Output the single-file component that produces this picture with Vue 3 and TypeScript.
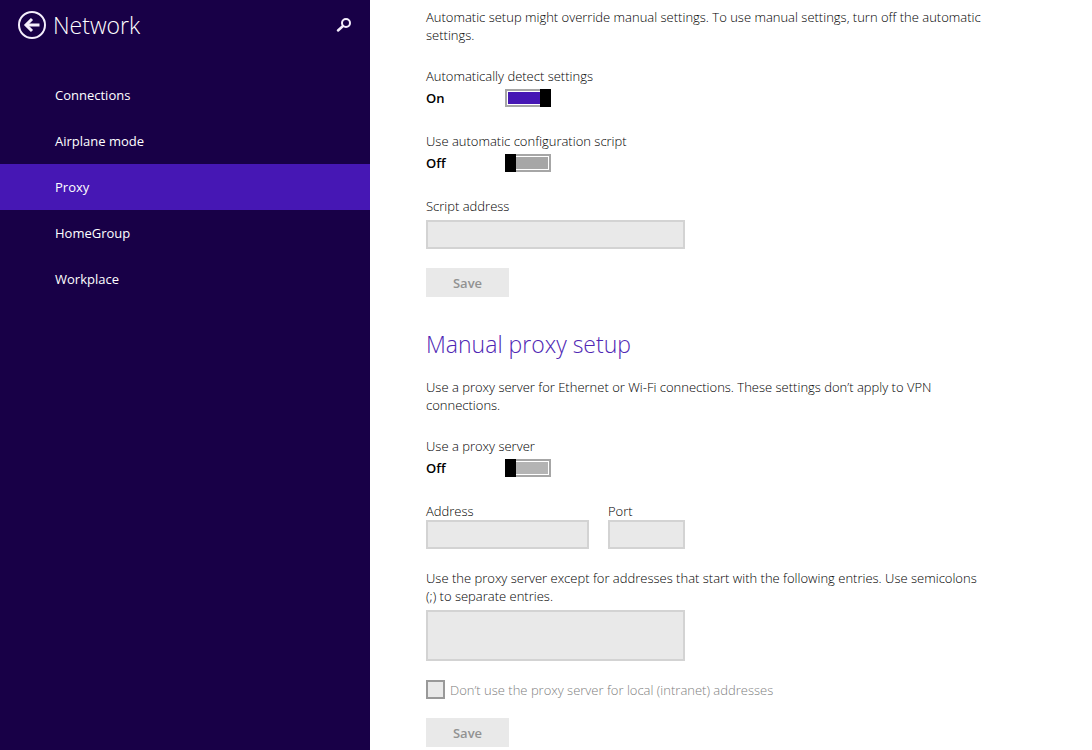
<script setup lang="ts">
import { ref } from 'vue'

interface NavItem {
  id: string
  label: string
}

const navItems: NavItem[] = [
  { id: 'connections', label: 'Connections' },
  { id: 'airplane', label: 'Airplane mode' },
  { id: 'proxy', label: 'Proxy' },
  { id: 'homegroup', label: 'HomeGroup' },
  { id: 'workplace', label: 'Workplace' },
]

const current = ref('proxy')
const autoDetect = ref(true)
const useScript = ref(false)
const useProxy = ref(false)
const scriptAddress = ref('')
const address = ref('')
const port = ref('')
const exceptions = ref('')
const bypassLocal = ref(false)
</script>

<template>
  <div class="settings">
    <aside class="sidebar">
      <header class="top">
        <button class="icon-button" type="button" aria-label="Back">
          <svg width="30" height="30" viewBox="0 0 30 30" fill="none" stroke="currentColor">
            <circle cx="15" cy="15" r="13" stroke-width="2" />
            <path d="M9 15H22.500" stroke-width="3" />
            <path d="M15 9L9 15L15 21" stroke-width="3" />
          </svg>
        </button>
        <h1 class="title">Network</h1>
        <button class="icon-button" type="button" aria-label="Search">
          <svg width="16" height="16" viewBox="0 0 16 16" fill="none" stroke="currentColor">
            <circle cx="10" cy="6" r="4" stroke-width="2" />
            <path d="M7 9L2 13.500" stroke-width="2.500" stroke-linecap="round" />
          </svg>
        </button>
      </header>
      <nav class="nav">
        <a
          v-for="item in navItems"
          :key="item.id"
          :href="'#' + item.id"
          class="nav-item"
          :class="{ active: item.id === current }"
          @click.prevent="current = item.id"
        >{{ item.label }}</a>
      </nav>
    </aside>

    <main class="content">
      <section>
        <p class="text">Automatic setup might override manual settings. To use manual settings, turn off the automatic settings.</p>

        <div class="field">
          <label for="detect">Automatically detect settings</label>
          <div class="switch-row">
            <span class="state">{{ autoDetect ? 'On' : 'Off' }}</span>
            <input id="detect" v-model="autoDetect" class="switch" type="checkbox" role="switch" />
          </div>
        </div>

        <div class="field">
          <label for="use-script">Use automatic configuration script</label>
          <div class="switch-row">
            <span class="state">{{ useScript ? 'On' : 'Off' }}</span>
            <input id="use-script" v-model="useScript" class="switch" type="checkbox" role="switch" />
          </div>
        </div>

        <div class="field spaced">
          <label for="script">Script address</label>
          <input id="script" v-model="scriptAddress" class="box" type="text" :disabled="!useScript" />
        </div>

        <button class="save" type="button" disabled>Save</button>
      </section>

      <section class="manual">
        <h2 class="heading">Manual proxy setup</h2>
        <p class="text">Use a proxy server for Ethernet or Wi-Fi connections. These settings don’t apply to VPN connections.</p>

        <div class="field">
          <label for="use-proxy">Use a proxy server</label>
          <div class="switch-row">
            <span class="state">{{ useProxy ? 'On' : 'Off' }}</span>
            <input id="use-proxy" v-model="useProxy" class="switch light" type="checkbox" role="switch" />
          </div>
        </div>

        <div class="pair">
          <div class="field">
            <label for="address">Address</label>
            <input id="address" v-model="address" class="box" type="text" :disabled="!useProxy" />
          </div>
          <div class="field">
            <label for="port">Port</label>
            <input id="port" v-model="port" class="box" type="text" :disabled="!useProxy" />
          </div>
        </div>

        <div class="field spaced">
          <label for="exceptions">Use the proxy server except for addresses that start with the following entries. Use semicolons (;) to separate entries.</label>
          <textarea id="exceptions" v-model="exceptions" class="box area" :disabled="!useProxy"></textarea>
        </div>

        <div class="check-row">
          <input id="local" v-model="bypassLocal" class="check" type="checkbox" :disabled="!useProxy" />
          <label for="local">Don’t use the proxy server for local (intranet) addresses</label>
        </div>

        <button class="save" type="button" disabled>Save</button>
      </section>
    </main>
  </div>
</template>

<style>
body {
  margin: 0;
  background: #fff;
}
</style>

<style scoped>
.settings {
  display: grid;
  grid-template-columns: 370px minmax(0, 1fr);
  min-height: 100vh;
  font: 300 13px/18px "Open Sans", "Noto Sans", sans-serif;
  color: #000;
}

.settings * {
  box-sizing: border-box;
}

.sidebar {
  background: #180047;
  color: #fff;
}

.top {
  display: flex;
  align-items: center;
  height: 50px;
  padding: 0 18px 0 17px;
}

.icon-button {
  display: flex;
  padding: 0;
  border: 0;
  background: none;
  color: #f4eefc;
}

.title {
  flex: 1;
  margin: 0;
  padding-left: 6px;
  font-size: 23px;
  font-weight: 300;
  line-height: 32px;
}

.nav {
  padding-top: 22px;
}

.nav-item {
  display: flex;
  align-items: center;
  height: 46px;
  padding-left: 55px;
  color: #fff;
  font-weight: 400;
  text-decoration: none;
}

.nav-item.active {
  background: #4617b4;
}

.content {
  padding: 8px 56px 3px;
}

.text {
  max-width: 560px;
  margin: 0 0 23px;
}

.field {
  display: flex;
  flex-direction: column;
  align-items: flex-start;
  gap: 4px;
  margin-bottom: 25px;
}

.field.spaced {
  max-width: 560px;
  gap: 5px;
  margin-bottom: 19px;
}

.switch-row {
  display: flex;
  align-items: center;
}

.state {
  width: 79px;
  font-weight: 600;
}

.switch {
  appearance: none;
  display: flex;
  width: 46px;
  height: 18px;
  margin: 0;
  padding: 1px;
  border: 2px solid #a6a6a6;
  background: #a6a6a6 content-box;
}

.switch.light {
  background-color: #b4b4b4;
}

.switch::before {
  content: "";
  width: 11px;
  height: 18px;
  margin: -3px;
  background: #000;
}

.switch:checked {
  justify-content: flex-end;
  background-color: #4617b4;
}

.box {
  width: 259px;
  height: 29px;
  margin: 0;
  padding: 4px 8px;
  border: 2px solid #d3d3d3;
  border-radius: 0;
  background: #e9e9e9;
  font: inherit;
}

.area {
  display: block;
  height: 51px;
  resize: none;
}

.save {
  display: block;
  width: 83px;
  height: 29px;
  padding: 0;
  border: 0;
  background: #e9e9e9;
  color: #929292;
  font: inherit;
  font-weight: 600;
}

.manual {
  padding-top: 31px;
}

.heading {
  margin: 0 0 18px;
  color: #4f27b4;
  font-size: 23px;
  font-weight: 300;
  line-height: 32px;
}

.pair {
  display: grid;
  grid-template-columns: 163px 77px;
  gap: 19px;
  margin-bottom: 20px;
}

.pair .field {
  gap: 0;
  margin: 0;
}

.pair .box {
  width: 100%;
}

.check-row {
  display: flex;
  align-items: center;
  gap: 5px;
  margin-bottom: 19px;
  color: #808080;
}

.check {
  appearance: none;
  width: 19px;
  height: 19px;
  margin: 0;
  border: 2px solid #999;
  background: #e9e9e9;
}
</style>
